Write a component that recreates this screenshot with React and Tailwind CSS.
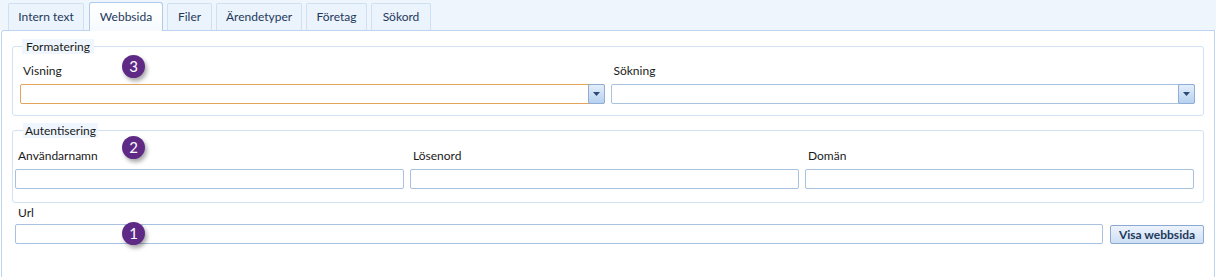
import React from 'react';

const tabs = [
  { label: 'Intern text', w: 'w-[76px]', extra: 'mr-[1px]' },
  { label: 'Webbsida', w: 'w-[74px]', selected: true },
  { label: 'Filer', w: 'w-[45px]' },
  { label: 'Ärendetyper', w: 'w-[86px]' },
  { label: 'Företag', w: 'w-[61px]' },
  { label: 'Sökord', w: 'w-[60px]' },
];

function Tab({ label, w, selected, extra = '' }) {
  if (selected) {
    return (
      <div
        className={`${w} ${extra} relative z-10 -mb-px h-[29px] flex items-center justify-center rounded-t-[3px] border border-b-0 border-[#aecbec] bg-gradient-to-b from-[#ffffff] to-[#f6faff] text-[#1e395b]`}
      >
        {label}
      </div>
    );
  }
  return (
    <div
      className={`${w} ${extra} h-[27px] flex items-center justify-center rounded-t-[2px] border border-b-0 border-[#cfe0f3] bg-[#ebf3fc] text-[#1e395b]`}
    >
      {label}
    </div>
  );
}

function Combo({ focused }) {
  return (
    <div
      className={`h-[20px] flex rounded-[2px] border bg-white ${
        focused ? 'border-[#e3a45e]' : 'border-[#a7c1df]'
      }`}
    >
      <div className="flex-1" />
      <div className="w-[17px] -my-px -mr-px flex items-center justify-center rounded-[2px] border border-[#8eaed6] bg-gradient-to-b from-[#e3eefa] to-[#b7d1ef]">
        <svg width="7" height="4" viewBox="0 0 7 4">
          <path d="M0 0h7L3.5 4z" fill="#2c4b74" />
        </svg>
      </div>
    </div>
  );
}

function TextBox() {
  return <div className="h-[20px] rounded-[2px] border border-[#a7c1df] bg-white" />;
}

function Badge({ n, className }) {
  return (
    <div
      className={`absolute w-[23px] h-[23px] rounded-full bg-[#5e2a86] text-white text-[15px] leading-[23px] text-center shadow-[2px_3px_4px_rgba(0,0,0,0.35)] ${className}`}
    >
      {n}
    </div>
  );
}

export default function App() {
  return (
    <div className="relative w-[1216px] h-[277px] overflow-hidden bg-white text-[12px] text-[#1a1a1a] font-['Lato',sans-serif]">
      <div className="h-[30px] bg-[#eef5fd] flex items-end pl-[8px] gap-[4px]">
        {tabs.map((t) => (
          <Tab key={t.label} {...t} />
        ))}
      </div>

      <div className="ml-[1px] w-[1214px] h-[247px] border border-b-0 border-[#bcd4ee] rounded-tl-[3px]">
        <fieldset className="mx-[10px] mt-[8px] pl-[7px] pr-[8px] pb-[11px] rounded-[3px] border border-[#d3e2f3]">
          <legend className="ml-[2px] px-[4px] bg-[#eff6fd] leading-[15px]">Formatering</legend>
          <div className="grid grid-cols-2 gap-[6px] mt-[10px]">
            <div>
              <div className="pl-[3px] leading-[14px] mb-[6px]">Visning</div>
              <Combo focused />
            </div>
            <div>
              <div className="pl-[3px] leading-[14px] mb-[6px]">Sökning</div>
              <Combo />
            </div>
          </div>
        </fieldset>

        <fieldset className="mx-[10px] mt-[7px] pl-[2px] pr-[9px] pb-[13px] rounded-[3px] border border-[#d3e2f3]">
          <legend className="ml-[8px] px-[2px] bg-[#eff6fd] leading-[15px]">Autentisering</legend>
          <div className="grid grid-cols-3 gap-[6px] mt-[11px]">
            <div>
              <div className="pl-[3px] leading-[14px] mb-[6px]">Användarnamn</div>
              <TextBox />
            </div>
            <div>
              <div className="pl-[3px] leading-[14px] mb-[6px]">Lösenord</div>
              <TextBox />
            </div>
            <div>
              <div className="pl-[3px] leading-[14px] mb-[6px]">Domän</div>
              <TextBox />
            </div>
          </div>
        </fieldset>

        <div className="ml-[13px] mr-[10px] mt-[3px]">
          <div className="pl-[3px] leading-[14px] mb-[4px]">Url</div>
          <div className="flex gap-[7px] items-start">
            <div className="flex-1">
              <TextBox />
            </div>
            <button className="mt-px w-[94px] h-[19px] rounded-[2px] border border-[#8ba9d1] bg-gradient-to-b from-[#edf3fc] to-[#cddff5] text-[#1e395b] font-bold text-[12px] leading-[17px]">
              Visa webbsida
            </button>
          </div>
        </div>
      </div>

      <Badge n="3" className="left-[122px] top-[55px]" />
      <Badge n="2" className="left-[122px] top-[136px]" />
      <Badge n="1" className="left-[122px] top-[222px]" />
    </div>
  );
}
